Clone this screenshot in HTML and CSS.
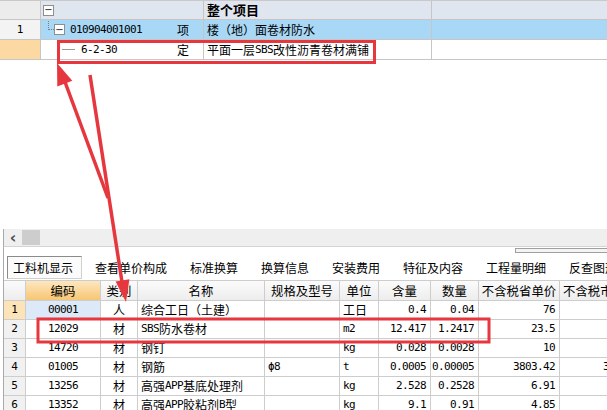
FILE: index.html
```html
<!DOCTYPE html>
<html lang="zh-CN">
<head>
<meta charset="utf-8">
<title>工料机显示</title>
<link rel="stylesheet" href="styles.css">
</head>
<body>
<div class="app">
  <div class="top">
    <div class="trow thead">
      <div class="tc rn rn-head"></div>
      <div class="tc tree"><span class="tbox hbox">−</span></div>
      <div class="tc type"></div>
      <div class="tc tname bold">整个项目</div>
      <div class="tc rest"></div>
    </div>
    <div class="trow tsel">
      <div class="tc rn">1</div>
      <div class="tc tree t1"><span class="conn"></span><span class="tbox">−</span><span class="a code">010904001001</span></div>
      <div class="tc type">项</div>
      <div class="tc tname">楼（地）面卷材防水</div>
      <div class="tc rest"></div>
    </div>
    <div class="trow">
      <div class="tc rn rn-cur"></div>
      <div class="tc tree t2"><span class="leaf"></span><span class="a">6-2-30</span></div>
      <div class="tc type">定</div>
      <div class="tc tname">平面一层<span class="a">SBS</span>改性沥青卷材满铺</div>
      <div class="tc rest"></div>
    </div>
  </div>

  <div class="hscroll">
    <span class="larr">&lsaquo;</span>
    <span class="thumb"></span>
  </div>

  <div class="tabzone">
    <div class="tabs">
      <span class="tab on">工料机显示</span>
      <span class="sep"></span>
      <span class="tab">查看单价构成</span>
      <span class="sep"></span>
      <span class="tab">标准换算</span>
      <span class="sep"></span>
      <span class="tab">换算信息</span>
      <span class="sep"></span>
      <span class="tab">安装费用</span>
      <span class="sep"></span>
      <span class="tab">特征及内容</span>
      <span class="sep"></span>
      <span class="tab">工程量明细</span>
      <span class="sep"></span>
      <span class="tab">反查图形工程量</span>
    </div>
    <span class="minibar"></span>
  </div>

  <div class="btable">
    <div class="brow bhead">
      <div class="bc rnc"></div>
      <div class="bc hc hot">编码</div>
      <div class="bc hc">类别</div>
      <div class="bc hc">名称</div>
      <div class="bc hc">规格及型号</div>
      <div class="bc hc">单位</div>
      <div class="bc hc">含量</div>
      <div class="bc hc">数量</div>
      <div class="bc hc">不含税省单价</div>
      <div class="bc hc lc">不含税市场价</div>
    </div>
    <div class="brow">
      <div class="bc rnc rn-cur2">1</div>
      <div class="bc ctr a sel">00001</div>
      <div class="bc ctr">人</div>
      <div class="bc lft">综合工日（土建）</div>
      <div class="bc"></div>
      <div class="bc lft">工日</div>
      <div class="bc rgt a">0.4</div>
      <div class="bc rgt a">0.04</div>
      <div class="bc rgt a">76</div>
      <div class="bc rgt a"></div>
    </div>
    <div class="brow">
      <div class="bc rnc">2</div>
      <div class="bc ctr a">12029</div>
      <div class="bc ctr">材</div>
      <div class="bc lft"><span class="a">SBS</span>防水卷材</div>
      <div class="bc"></div>
      <div class="bc lft a">m2</div>
      <div class="bc rgt a">12.417</div>
      <div class="bc rgt a">1.2417</div>
      <div class="bc rgt a">23.5</div>
      <div class="bc rgt a"></div>
    </div>
    <div class="brow">
      <div class="bc rnc">3</div>
      <div class="bc ctr a">14720</div>
      <div class="bc ctr">材</div>
      <div class="bc lft">钢钉</div>
      <div class="bc"></div>
      <div class="bc lft a">kg</div>
      <div class="bc rgt a">0.028</div>
      <div class="bc rgt a">0.0028</div>
      <div class="bc rgt a">10</div>
      <div class="bc rgt a"></div>
    </div>
    <div class="brow">
      <div class="bc rnc">4</div>
      <div class="bc ctr a">01005</div>
      <div class="bc ctr">材</div>
      <div class="bc lft">钢筋</div>
      <div class="bc lft a">ϕ8</div>
      <div class="bc lft a">t</div>
      <div class="bc rgt a">0.0005</div>
      <div class="bc rgt a">0.00005</div>
      <div class="bc rgt a">3803.42</div>
      <div class="bc rgt a">3803.42</div>
    </div>
    <div class="brow">
      <div class="bc rnc">5</div>
      <div class="bc ctr a">13256</div>
      <div class="bc ctr">材</div>
      <div class="bc lft">高强<span class="a">APP</span>基底处理剂</div>
      <div class="bc"></div>
      <div class="bc lft a">kg</div>
      <div class="bc rgt a">2.528</div>
      <div class="bc rgt a">0.2528</div>
      <div class="bc rgt a">6.91</div>
      <div class="bc rgt a"></div>
    </div>
    <div class="brow">
      <div class="bc rnc">6</div>
      <div class="bc ctr a">13352</div>
      <div class="bc ctr">材</div>
      <div class="bc lft">高强<span class="a">APP</span>胶粘剂<span class="a">B</span>型</div>
      <div class="bc"></div>
      <div class="bc lft a">kg</div>
      <div class="bc rgt a">9.1</div>
      <div class="bc rgt a">0.91</div>
      <div class="bc rgt a">4.85</div>
      <div class="bc rgt a"></div>
    </div>
  </div>

  <svg class="marks" width="607" height="410" viewBox="0 0 607 410" aria-hidden="true">
    <rect x="58.5" y="41.5" width="316" height="21" fill="none" stroke="#e5373d" stroke-width="3"/>
    <rect x="38" y="319" width="451" height="23" fill="none" stroke="#e5373d" stroke-width="3"/>
    <line x1="108" y1="198" x2="65" y2="82" stroke="#e5373d" stroke-width="3.5"/>
    <polygon points="57,63 72.3,80.8 57.3,86.4" fill="#e5373d"/>
    <line x1="90" y1="75" x2="122" y2="282" stroke="#e5373d" stroke-width="3.5"/>
    <polygon points="126,302 129.4,279.2 115.6,281.4" fill="#e5373d"/>
  </svg>
</div>
</body>
</html>
```

FILE: styles.css
```css
* { box-sizing: border-box; }

html, body {
  margin: 0;
  padding: 0;
}

body {
  width: 607px;
  height: 410px;
  overflow: hidden;
  background: #ffffff;
  color: #000000;
  font-family: "Noto Sans CJK SC", "Noto Sans", sans-serif;
  font-size: 12px;
}

.app {
  position: relative;
  width: 607px;
  height: 410px;
  overflow: hidden;
}

.a {
  font-family: "DejaVu Sans Mono", "Liberation Mono", monospace;
  font-size: 11px;
  letter-spacing: -0.62px;
}

.bold { font-weight: 700; font-size: 13px; }

/* ---------- top grid ---------- */
.top {
  height: 229px;
  border-top: 1px solid #c9c9c9;
}

.trow {
  display: grid;
  grid-template-columns: 41px 131px 32px 228px 1fr;
  height: 19px;
  border-bottom: 1px solid #c6c6c6;
}

.trow + .trow { height: 20px; }

.thead { background: #dfe6ef; }
.tsel { background: #a8d8f6; }

.tc {
  display: flex;
  align-items: center;
  white-space: nowrap;
  overflow: hidden;
  line-height: 18px;
}

.rn {
  justify-content: center;
  border-right: 1px solid #c6c6c6;
  background: #f3f3f3;
  font-family: "DejaVu Sans Mono", monospace;
  font-size: 11px;
}
.rn-head { background: #ececec; }
.rn-cur { background: #fcd8a3; }

.tree { position: relative; }
.type { border-right: 1px solid #c6c6c6; padding-left: 5px; }
.tname { border-right: 1px solid #c6c6c6; padding-left: 3px; }

.tbox {
  display: inline-flex;
  align-items: center;
  justify-content: center;
  width: 11px;
  height: 11px;
  border: 1px solid #8e8e8e;
  background: #ffffff;
  font-size: 10px;
  line-height: 1;
  color: #222;
  font-family: "DejaVu Sans", sans-serif;
}
.hbox { margin-left: 2px; }

.t1 { padding-left: 13px; }
.t1 .code { margin-left: 5px; }
.conn {
  position: absolute;
  left: 7px;
  top: -3px;
  width: 6px;
  height: 13px;
  border-left: 1px dotted #7d7d7d;
  border-bottom: 1px dotted #7d7d7d;
}

.t2 { padding-left: 21px; }
.leaf {
  display: inline-block;
  width: 13px;
  height: 1px;
  background: #9a9a9a;
  margin-right: 6px;
}

/* ---------- scroll bar ---------- */
.hscroll {
  display: flex;
  align-items: center;
  height: 18px;
  margin-left: 3px;
  border-left: 1px solid #a9a9a9;
  background: #efefef;
  border-bottom: 1px solid #d4d4d4;
}
.larr {
  width: 18px;
  text-align: center;
  font-family: "DejaVu Sans", sans-serif;
  font-size: 16px;
  font-weight: 700;
  line-height: 16px;
  color: #505050;
}
.thumb {
  width: 18px;
  height: 15px;
  background: #cdcdcd;
}

/* ---------- tabs ---------- */
.tabzone {
  position: relative;
  height: 33px;
  margin-left: 3px;
  border-left: 1px solid #a9a9a9;
  padding-top: 8px;
}
.tabs {
  display: flex;
  align-items: center;
  height: 24px;
  padding-left: 3px;
  white-space: nowrap;
}
.tab {
  display: flex;
  align-items: center;
  height: 23px;
  padding: 0 10px;
  font-size: 12px;
}
.tab.on {
  padding: 0 8px 0 5px;
  border: 1px solid #8b8b8b;
  border-right-color: #d0d0d0;
  border-bottom-color: #d0d0d0;
  background: #fbfbfb;
}
.sep {
  width: 1px;
  height: 17px;
  background: #c3c3c3;
  margin: 0 1px 0 2px;
}
.minibar {
  position: absolute;
  left: 511px;
  top: 1px;
  width: 100px;
  height: 5px;
  border: 1px solid #a0a0a0;
  background: #f4f4f4;
}

/* ---------- bottom grid ---------- */
.btable {
  margin-left: 3px;
  border-left: 1px solid #a9a9a9;
  width: 650px;
}
.brow {
  display: grid;
  grid-template-columns: 22px 75px 37px 127px 75px 39px 52px 48px 81px 90px;
  height: 19px;
  border-bottom: 1px solid #cdcdcd;
}
.bhead {
  height: 21px;
  border-top: 1px solid #cdcdcd;
  background: linear-gradient(#fbfbfb, #ededed);
}
.bc {
  display: flex;
  align-items: center;
  border-right: 1px solid #cdcdcd;
  white-space: nowrap;
  overflow: hidden;
  line-height: 18px;
}
.hc { justify-content: center; font-size: 12.4px; }
.hc.lc { justify-content: flex-start; padding-left: 3px; }
.hot { background: linear-gradient(#fde7bf, #f7c674); }
.rnc {
  justify-content: center;
  background: #f1f1f1;
  font-family: "DejaVu Sans Mono", monospace;
  font-size: 11px;
}
.bhead .rnc { background: transparent; }
.rn-cur2 { background: #fce3b8; }
.sel { background: #dbe9f8; }
.ctr { justify-content: center; }
.lft { justify-content: flex-start; padding-left: 3px; }
.rgt { justify-content: flex-end; padding-right: 4px; }

/* ---------- annotations ---------- */
.marks {
  position: absolute;
  left: 0;
  top: 0;
  pointer-events: none;
}
```
